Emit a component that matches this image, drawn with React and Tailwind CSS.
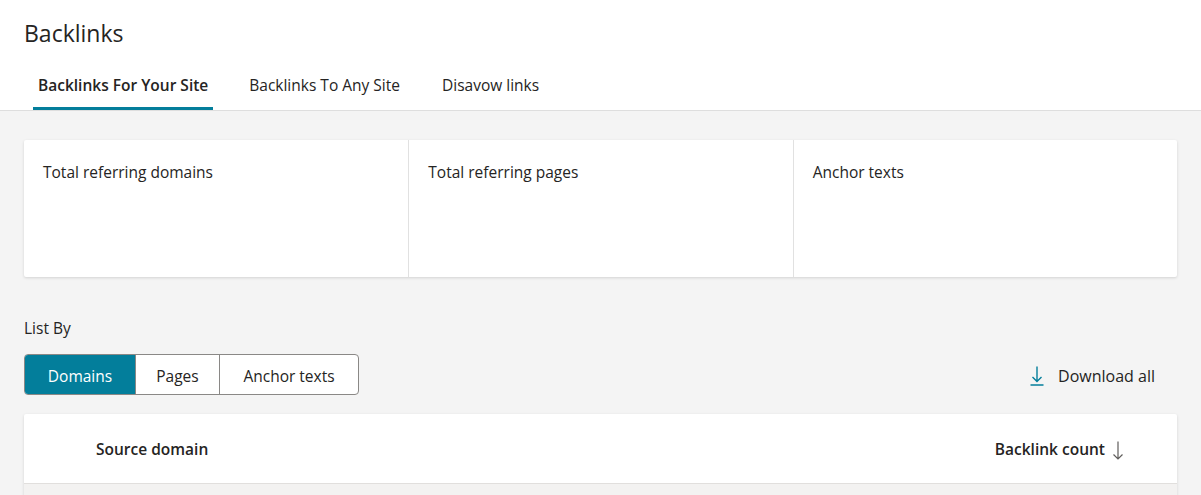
import React from "react";

const font = { fontFamily: '"Segoe UI", "Open Sans", "Noto Sans", sans-serif' };

function DownloadIcon({ className }) {
  return (
    <svg className={className} viewBox="0 0 14 20" fill="none" stroke="currentColor" strokeWidth="1.4">
      <path d="M7 0.5v15M2.5 11l4.5 4.5 4.5-4.5M0.5 19h13" />
    </svg>
  );
}

function SortDownIcon({ className }) {
  return (
    <svg className={className} viewBox="0 0 12 20" fill="none" stroke="currentColor" strokeWidth="1.2">
      <path d="M6 1v17.5M1.5 14 6 18.5l4.5-4.5" />
    </svg>
  );
}

export default function App() {
  const tabs = [
    { label: "Backlinks For Your Site", ml: "" },
    { label: "Backlinks To Any Site", ml: "ml-[25px]" },
    { label: "Disavow links", ml: "ml-[26px]" },
  ];
  const stats = ["Total referring domains", "Total referring pages", "Anchor texts"];
  const segs = [
    { label: "Domains", w: "w-[110px]" },
    { label: "Pages", w: "w-[84px]" },
    { label: "Anchor texts", w: "w-[139px]" },
  ];
  return (
    <div className="w-[1201px] h-[495px] overflow-hidden bg-[#f4f4f4] text-[#252423]" style={font}>
      <header className="bg-white border-b border-[#dedede] h-[111px] flex flex-col">
        <h1 className="pl-[24px] pt-[17px] text-[23px] leading-[32px] text-[#252423]">Backlinks</h1>
        <nav className="flex pl-[33px] mt-[20px] gap-[6px]">
          {tabs.map((t, i) => (
            <div
              key={t.label}
              className={`px-[5px] h-[41px] flex items-start pt-[5px] text-[15.5px] leading-[22px] border-b-[3px] ${
                i === 0 ? "border-[#037e9b] font-semibold" : "border-transparent"
              } ${t.ml}`}
            >
              {t.label}
            </div>
          ))}
        </nav>
      </header>

      <main className="px-[24px] pt-[29px]">
        <section className="bg-white rounded-[2px] shadow-[0_1px_3px_rgba(0,0,0,0.14)] grid grid-cols-3 h-[137px]">
          {stats.map((s, i) => (
            <div key={s} className={`pl-[19px] pt-[21px] text-[15.5px] leading-[22px] ${i > 0 ? "border-l border-[#e1e1e1]" : ""}`}>
              {s}
            </div>
          ))}
        </section>

        <div className="mt-[40px] text-[15.5px] leading-[22px]">List By</div>

        <div className="mt-[15px] flex items-center justify-between">
          <div className="flex h-[41px] rounded-[4px] border border-[#8a8886] overflow-hidden bg-white">
            {segs.map((s, i) => (
              <div
                key={s.label}
                className={`${s.w} flex items-center justify-center pt-[4px] text-[15.5px] ${
                  i === 0 ? "bg-[#037e9b] text-white" : "text-[#252423]"
                } ${i > 0 ? "border-l border-[#8a8886]" : ""}`}
              >
                {s.label}
              </div>
            ))}
          </div>
          <div className="flex items-center gap-[14px] pr-[22px] pt-[2px] text-[16px]">
            <DownloadIcon className="w-[14px] h-[20px] text-[#037e9b]" />
            <span className="pt-[1px]">Download all</span>
          </div>
        </div>

        <section className="mt-[19px] bg-white rounded-[2px] shadow-[0_1px_3px_rgba(0,0,0,0.14)]">
          <div className="h-[70px] flex items-center justify-between pl-[72px] pr-[53px] pt-[3px] border-b border-[#e1dfdd] text-[15.5px] font-semibold">
            <span>Source domain</span>
            <span className="flex items-center gap-[7px]">
              Backlink count
              <SortDownIcon className="w-[12px] h-[21px] text-[#605e5c]" />
            </span>
          </div>
          <div className="h-[30px] bg-[#f3f2f1]" />
        </section>
      </main>
    </div>
  );
}
